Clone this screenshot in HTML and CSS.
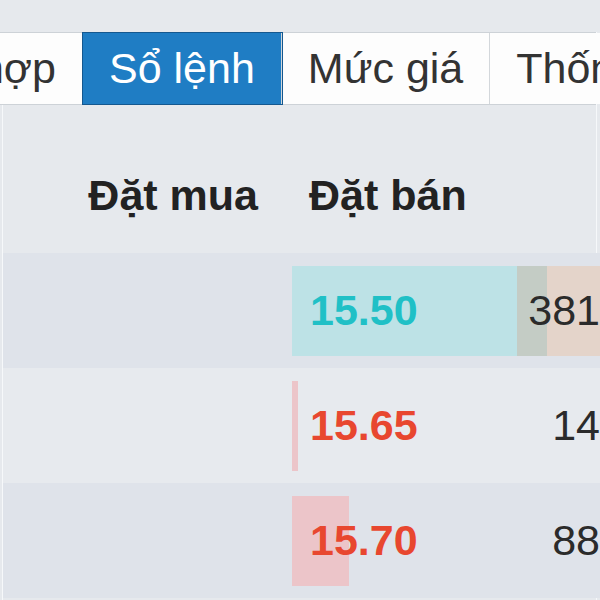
FILE: index.html
```html
<!DOCTYPE html>
<html lang="vi">
<head>
    <meta charset="UTF-8">
    <meta name="viewport" content="width=device-width, initial-scale=1.0">
    <title>Sổ lệnh</title>
    <link rel="stylesheet" href="styles.css">
</head>
<body>
    <div class="panel">
        <div class="tabs">
            <div class="tab">Tổng hợp</div>
            <div class="tab active">Sổ lệnh</div>
            <div class="tab">Mức giá</div>
            <div class="tab">Thống kê</div>
        </div>

        <div class="book">
            <div class="book-head">
                <div class="col-buy">Đặt mua</div>
                <div class="col-sell">Đặt bán</div>
                <div class="col-vol"></div>
            </div>

            <div class="book-row dark">
                <div class="col-buy"></div>
                <div class="col-sell">
                    <span class="bar bar-ask" style="width: 225px;"></span>
                    <span class="price ref">15.50</span>
                </div>
                <div class="col-vol">
                    <span class="bar bar-vol" style="width: 100%;"></span>
                    <span class="bar bar-mix" style="width: 30px;"></span>
                    <span class="vol">381</span>
                </div>
            </div>

            <div class="book-row">
                <div class="col-buy"></div>
                <div class="col-sell">
                    <span class="bar bar-up" style="width: 6px;"></span>
                    <span class="price up">15.65</span>
                </div>
                <div class="col-vol">
                    <span class="vol">14</span>
                </div>
            </div>

            <div class="book-row dark">
                <div class="col-buy"></div>
                <div class="col-sell">
                    <span class="bar bar-up" style="width: 57px;"></span>
                    <span class="price up">15.70</span>
                </div>
                <div class="col-vol">
                    <span class="vol">88</span>
                </div>
            </div>
        </div>
    </div>
</body>
</html>
```

FILE: styles.css
```css
body {
    margin: 0;
    width: 600px;
    height: 600px;
    overflow: hidden;
    background-color: #e6e9ed;
    font-family: "Liberation Sans", Arial, sans-serif;
    font-size: 43px;
    color: #333;
}
.panel {
    margin-left: 2px;
    margin-right: 3px;
    height: 600px;
    border-left: 1px solid #f6f8fa;
    border-right: 1px solid #f6f8fa;
}
.tabs {
    display: flex;
    margin-top: 32px;
    margin-left: -159px;
    border-top: 1px solid #cdd2d7;
    border-bottom: 1px solid #cdd2d7;
    white-space: nowrap;
}
.tab {
    padding: 0 26px;
    line-height: 71px;
    background-color: #fdfdfd;
    border-right: 1px solid #d3d7db;
    color: #333;
}
.tab.active {
    background-color: #1f7dc4;
    color: #fff;
    outline: 1px solid #15588f;
    z-index: 1;
}
.book {
    margin-right: -4px;
}
.book-head, .book-row {
    display: grid;
    grid-template-columns: 289px 225px 1fr;
    line-height: 49px;
}
.book-head {
    height: 148px;
    font-weight: bold;
    color: #222;
}
.book-head > div {
    padding-top: 66px;
}
.book-head .col-buy {
    text-align: right;
    padding-right: 34px;
}
.book-head .col-sell {
    padding-left: 17px;
}
.book-row {
    height: 115px;
    background-color: #e7eaee;
}
.book-row.dark {
    background-color: #dfe3ea;
}
.book-row .col-sell, .book-row .col-vol {
    position: relative;
    display: flex;
    align-items: center;
}
.book-row .col-vol {
    justify-content: flex-end;
}
.bar {
    position: absolute;
    left: 0;
    top: 13px;
    bottom: 12px;
}
.bar-ask {
    background-color: #bde2e6;
}
.bar-up {
    background-color: #ecc5c9;
}
.bar-vol {
    background-color: #e4d4ca;
}
.bar-mix {
    background-color: #c4ccc5;
}
.price {
    position: relative;
    padding-left: 18px;
    font-weight: bold;
}
.price.ref {
    color: #20c0c6;
}
.price.up {
    color: #e8472f;
}
.vol {
    position: relative;
    color: #2b2b2b;
}
```
